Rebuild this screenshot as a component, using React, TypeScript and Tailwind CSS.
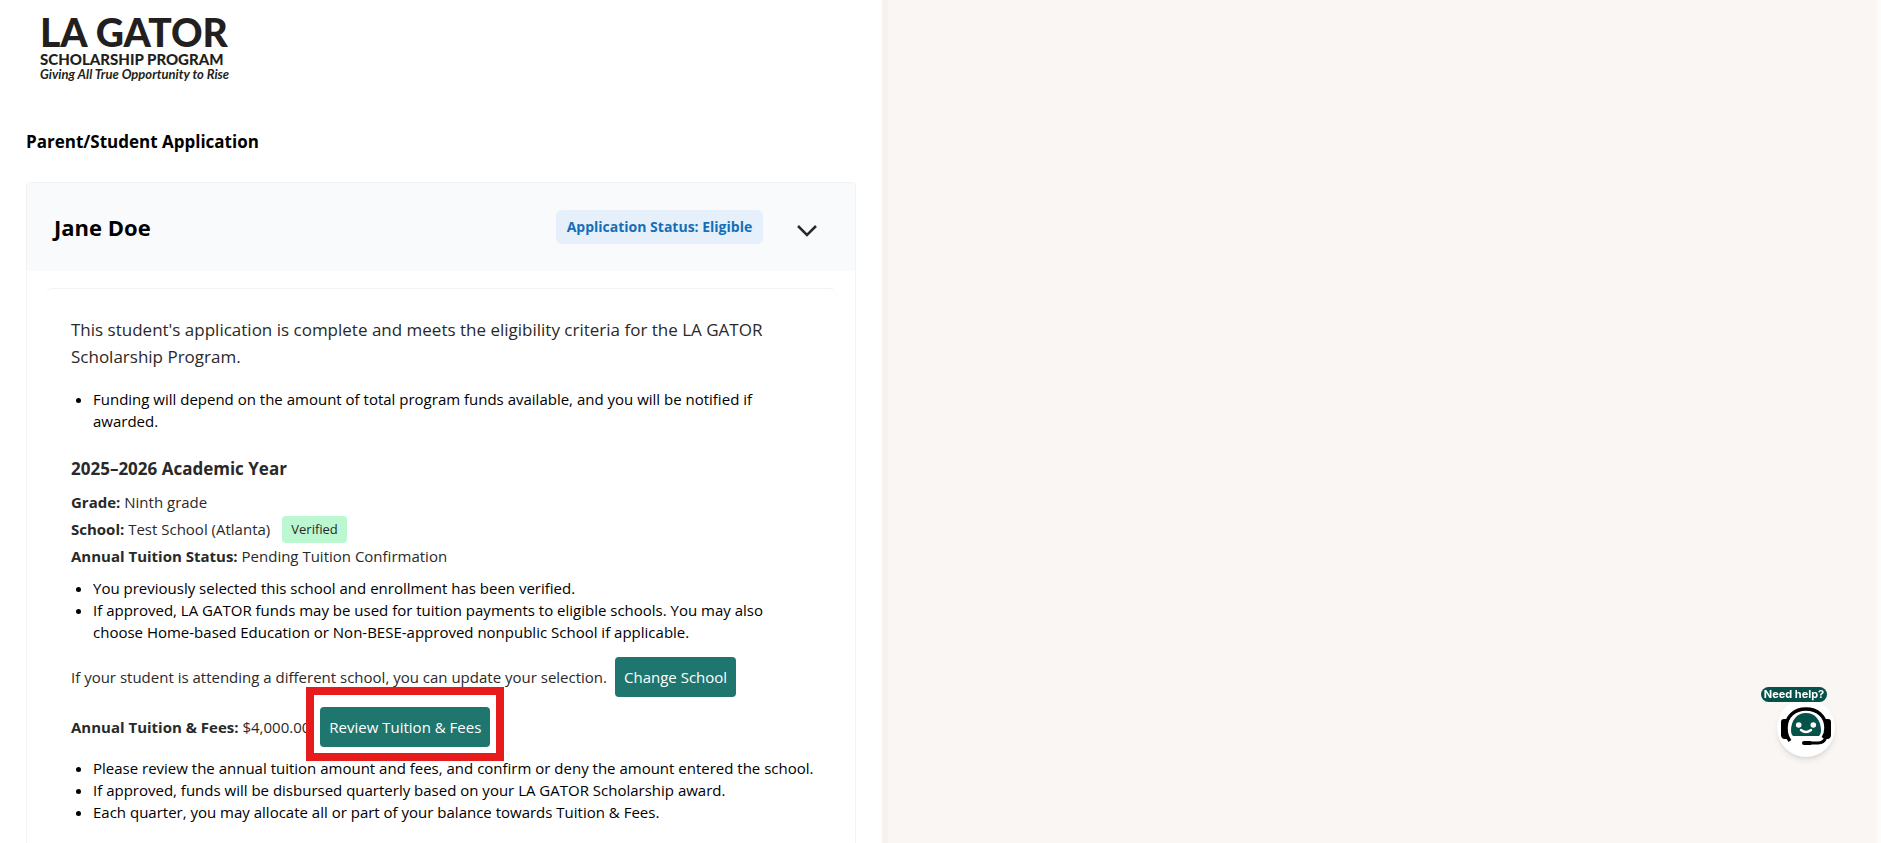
import { useState } from "react";

const HelpBot: React.FC = () => (
  <svg viewBox="0 0 58 58" className="size-[58px]" aria-hidden="true">
    <path d="M14 32C14 21 20 14 29 14s15 7 15 18q0 3-2 5H16q-2-2-2-5z" fill="#04524a" />
    <path d="M13 42Q9 37 9 29C9 17 18 10 29 10s20 7 20 19q0 6-3 10" fill="none" stroke="#000" strokeWidth="3.5" />
    <path d="M4 23q0-3 3-3h3v20H7q-3-1-3-4zM54 23q0-3-3-3h-3v20h3q3-1 3-4z" fill="#000" />
    <path d="M49 38q-2 6-8 6h-9" fill="none" stroke="#000" strokeWidth="3" />
    <rect x="25" y="42" width="10" height="4" rx="2" fill="#000" />
    <circle cx="21.700" cy="26" r="2.800" fill="#fff" />
    <circle cx="36.300" cy="26" r="2.800" fill="#fff" />
    <path d="M24 31q5 4 10 0" fill="none" stroke="#fff" strokeWidth="2.500" strokeLinecap="round" />
  </svg>
);

const BulletList: React.FC<{ items: string[] }> = ({ items }) => (
  <ul className="list-disc pl-[22px] leading-[22px] text-black">
    {items.map((item) => (
      <li key={item}>{item}</li>
    ))}
  </ul>
);

const App: React.FC = () => {
  const [open, setOpen] = useState(true);

  return (
    <div className="flex min-h-screen border-r-4 border-[#fcfcfc] bg-[#faf6f3] font-['Open_Sans',sans-serif] text-[15px] text-[#292929]">
      <main className="flex w-[47%] flex-col bg-white px-[26px]">
        {/* Logo */}
        <div className="flex flex-col self-start pt-[13px] pl-[14px] font-['Lato',sans-serif] text-[#231f20]">
          <span className="text-[39px] leading-[38px] font-black">LA GATOR</span>
          <span className="text-[15px] leading-4 font-black">SCHOLARSHIP PROGRAM</span>
          <span className="text-[13px] leading-[14px] font-bold italic">Giving All True Opportunity to Rise</span>
        </div>

        <h1 className="mt-[49px] text-[17px] leading-6 font-bold text-black">Parent/Student Application</h1>

        <section className="mt-7 flex-1 rounded-t border border-b-0 border-[#f1f3f5]">
          <header className="flex h-[88px] items-center rounded-t bg-[#f8fafc] pr-9 pl-[27px]">
            <h2 className="flex-1 text-[22px] leading-8 font-bold text-black">Jane Doe</h2>
            <span className="rounded-md bg-[#e6f0fb] px-[11px] py-1 text-[14px] leading-[26px] font-bold text-[#146eb8]">
              Application Status: Eligible
            </span>
            <button
              type="button"
              aria-label="Toggle application"
              aria-expanded={open}
              onClick={() => setOpen(!open)}
              className="ml-8 cursor-pointer pt-2"
            >
              <svg viewBox="0 0 24 24" className="size-6" fill="none" stroke="#292929" strokeWidth="2.500">
                <path d="M3 7l9 9 9-9" />
              </svg>
            </button>
          </header>

          {open && (
            <div className="mx-[18px] mt-[17px] rounded-t-lg border-t border-[#f1f3f5] pt-[27px] pr-[22px] pl-[26px]">
              <p className="text-[17px] leading-[27px]">
                This student's application is complete and meets the eligibility criteria for the LA GATOR Scholarship
                Program.
              </p>
              <div className="mt-[18px]">
                <BulletList
                  items={[
                    "Funding will depend on the amount of total program funds available, and you will be notified if awarded.",
                  ]}
                />
              </div>

              <h3 className="mt-[25px] text-[17px] leading-6 font-bold">2025–2026 Academic Year</h3>
              <div className="mt-2 leading-[27px]">
                <p>
                  <b>Grade:</b> Ninth grade
                </p>
                <p>
                  <b>School:</b> Test School (Atlanta)
                  <span className="ml-3 inline-block rounded bg-[#bbf7d0] px-[9px] align-top text-[13px]">
                    Verified
                  </span>
                </p>
                <p>
                  <b>Annual Tuition Status:</b> Pending Tuition Confirmation
                </p>
              </div>
              <div className="mt-[7px]">
                <BulletList
                  items={[
                    "You previously selected this school and enrollment has been verified.",
                    "If approved, LA GATOR funds may be used for tuition payments to eligible schools. You may also choose Home-based Education or Non-BESE-approved nonpublic School if applicable.",
                  ]}
                />
              </div>

              <div className="mt-[14px] flex items-center gap-2">
                <p>If your student is attending a different school, you can update your selection.</p>
                <button type="button" className="h-10 rounded-sm bg-[#1f766f] px-[9px] text-white">
                  Change School
                </button>
              </div>
              <div className="mt-[10px] flex items-center gap-[10px]">
                <p>
                  <b>Annual Tuition & Fees:</b> $4,000.00
                </p>
                <div className="relative">
                  <button type="button" className="h-10 rounded-sm bg-[#1f766f] px-[9px] text-white">
                    Review Tuition & Fees
                  </button>
                  {/* Callout frame around the review action */}
                  <div className="pointer-events-none absolute -inset-x-[14px] -top-5 -bottom-[14px] border-8 border-[#e71b1b]" />
                </div>
              </div>
              <div className="mt-[10px]">
                <BulletList
                  items={[
                    "Please review the annual tuition amount and fees, and confirm or deny the amount entered the school.",
                    "If approved, funds will be disbursed quarterly based on your LA GATOR Scholarship award.",
                    "Each quarter, you may allocate all or part of your balance towards Tuition & Fees.",
                  ]}
                />
              </div>
            </div>
          )}
        </section>
      </main>
      <div className="w-[6px] bg-[#f6f3ef]" />

      <button type="button" className="fixed right-[46px] bottom-[86px] flex cursor-pointer flex-col items-center">
        <span className="z-10 -mr-[6px] -ml-[30px] rounded-full bg-[#04524a] px-[3px] font-['Inter',sans-serif] text-[11px] leading-[15px] font-bold text-white">
          Need help?
        </span>
        <span className="-mt-[3px] rounded-full bg-white shadow-md">
          <HelpBot />
        </span>
      </button>
    </div>
  );
};

export default App;
